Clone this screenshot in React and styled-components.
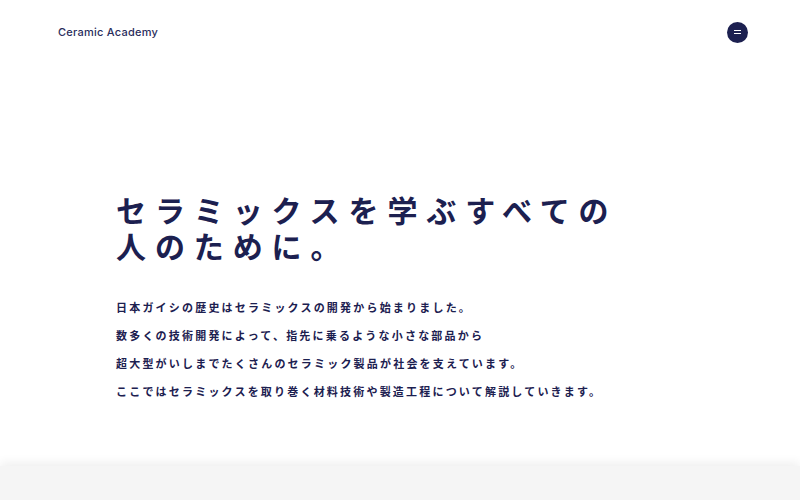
import React from "react";
import styled, { createGlobalStyle } from "styled-components";

const GlobalStyle = createGlobalStyle`
	body {
		margin: 0;
		background: #ffffff;
		font-family: "Noto Sans CJK JP", "Noto Sans", sans-serif;
		color: #1c2050;
	}
`;

const Page = styled.div`
	width: 100%;
	min-height: 500px;
	overflow: hidden;
`;

const Header = styled.header`
	height: 64px;
	display: flex;
	align-items: center;
	justify-content: space-between;
	padding: 0 52px 0 58px;
`;

const Logo = styled.div`
	font-family: "Inter", "Noto Sans", sans-serif;
	font-size: 11px;
	font-weight: 500;
	letter-spacing: 0.25px;
	color: #2a2d5c;
`;

const MenuButton = styled.button`
	width: 21px;
	height: 21px;
	border-radius: 50%;
	border: none;
	padding: 0;
	background: #1c2050;
	display: flex;
	flex-direction: column;
	align-items: center;
	justify-content: center;
	gap: 2px;
	cursor: pointer;
`;

const Bar = styled.span`
	display: block;
	width: 7px;
	height: 1px;
	background: #ffffff;
`;

const Hero = styled.section`
	padding: 127px 0 0 116px;
	height: 402px;
	box-sizing: border-box;
`;

const Title = styled.h1`
	margin: 0 0 30px;
	font-size: 30px;
	line-height: 36px;
	font-weight: 700;
	letter-spacing: 8.9px;
	color: #1c2050;
`;

const Lead = styled.p`
	margin: 0;
	font-size: 11px;
	line-height: 28px;
	font-weight: 700;
	letter-spacing: 2.2px;
	color: #1c2050;
`;

const Next = styled.section`
	height: 34px;
	background: #f5f5f5;
	box-shadow: 0 -3px 10px rgba(0, 0, 0, 0.07);
`;

const lines = [
	"日本ガイシの歴史はセラミックスの開発から始まりました。",
	"数多くの技術開発によって、指先に乗るような小さな部品から",
	"超大型がいしまでたくさんのセラミック製品が社会を支えています。",
	"ここではセラミックスを取り巻く材料技術や製造工程について解説していきます。",
];

export default function App() {
	return (
		<Page>
			<GlobalStyle />
			<Header>
				<Logo>Ceramic Academy</Logo>
				<MenuButton aria-label="menu">
					<Bar />
					<Bar />
				</MenuButton>
			</Header>
			<Hero>
				<Title>
					セラミックスを学ぶすべての
					<br />
					人のために。
				</Title>
				{lines.map((line) => (
					<Lead key={line}>{line}</Lead>
				))}
			</Hero>
			<Next />
		</Page>
	);
}
